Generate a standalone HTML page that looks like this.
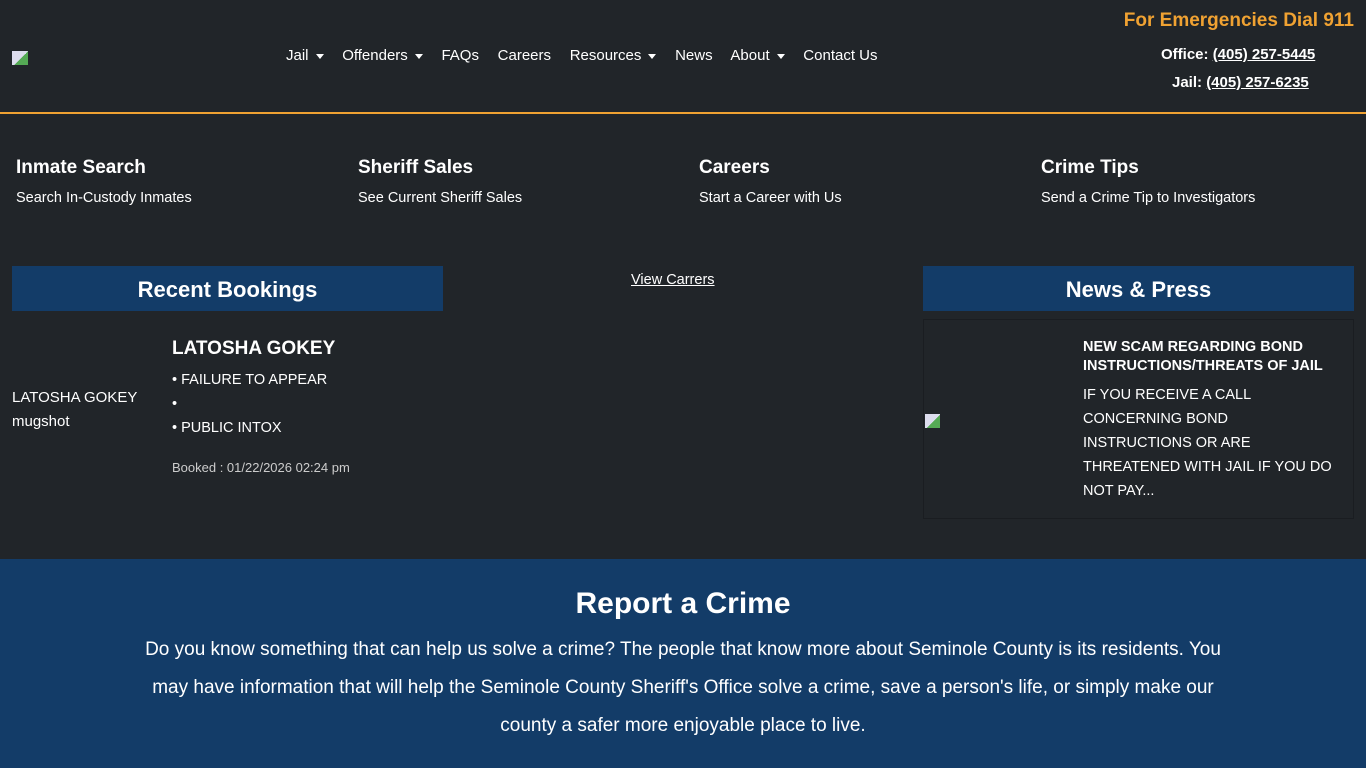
<!DOCTYPE html>
<html><head><meta charset="utf-8"><style>
*{margin:0;padding:0;box-sizing:border-box}
body{width:1366px;height:768px;overflow:hidden;background:#212529;color:#fff;font-family:"Liberation Sans",sans-serif;position:relative}
.a{position:absolute;white-space:nowrap}
.nav{top:47px;font-size:15px;left:286px;word-spacing:0}
.nav span{margin-right:14.5px}
.car{display:inline-block;border-top:5px solid #fff;border-left:4px solid transparent;border-right:4px solid transparent;vertical-align:middle;margin-left:7px}
u{text-decoration:underline}
.q h3{font-size:19px;font-weight:bold}
.q p{font-size:14.5px;margin-top:11px}
.hd{position:absolute;background:#133c68;height:45px;font-size:22px;font-weight:bold;text-align:center;line-height:47px}
</style></head><body>
<div class="a" style="left:12px;top:51px;width:16px;height:14px;background:linear-gradient(135deg,#dde 55%,#5a5 55%)"></div>
<div class="a nav"><span>Jail<i class="car"></i></span> <span>Offenders<i class="car"></i></span> <span>FAQs</span> <span>Careers</span> <span>Resources<i class="car"></i></span> <span>News</span> <span>About<i class="car"></i></span> <span>Contact Us</span></div>
<div class="a" style="right:12px;top:10px;color:#f0a232;font-size:19px;font-weight:bold">For Emergencies Dial 911</div>
<div class="a" style="left:1161px;top:46px;font-size:15px;font-weight:bold">Office: <u>(405) 257-5445</u></div>
<div class="a" style="left:1172px;top:74px;font-size:15px;font-weight:bold">Jail: <u>(405) 257-6235</u></div>
<div class="a" style="left:0;top:112px;width:1366px;height:2px;background:#f0a232"></div>
<div class="a q" style="left:16px;top:157px"><h3>Inmate Search</h3><p>Search In-Custody Inmates</p></div>
<div class="a q" style="left:358px;top:157px"><h3>Sheriff Sales</h3><p>See Current Sheriff Sales</p></div>
<div class="a q" style="left:699px;top:157px"><h3>Careers</h3><p>Start a Career with Us</p></div>
<div class="a q" style="left:1041px;top:157px"><h3>Crime Tips</h3><p>Send a Crime Tip to Investigators</p></div>
<div class="hd" style="left:12px;top:266px;width:431px">Recent Bookings</div>
<div class="a" style="left:12px;top:386px;font-size:15px;line-height:24px">LATOSHA GOKEY<br>mugshot</div>
<div class="a" style="left:172px;top:338px;font-size:19px;font-weight:bold">LATOSHA GOKEY</div>
<div class="a" style="left:172px;top:368px;font-size:14.5px;line-height:24px">• FAILURE TO APPEAR<br>•<br>• PUBLIC INTOX</div>
<div class="a" style="left:172px;top:460px;font-size:13px;color:#ccc">Booked : 01/22/2026 02:24 pm</div>
<div class="a" style="left:631px;top:272px;font-size:14.5px"><u>View Carrers</u></div>
<div class="hd" style="left:923px;top:266px;width:431px">News &amp; Press</div>
<div class="a" style="left:923px;top:319px;width:431px;height:200px;border:1px solid #1a1d21"></div>
<div class="a" style="left:925px;top:414px;width:15px;height:14px;background:linear-gradient(135deg,#dde 55%,#5a5 55%)"></div>
<div class="a" style="left:1083px;top:338px;font-size:14.5px;font-weight:bold;line-height:19px">NEW SCAM REGARDING BOND<br>INSTRUCTIONS/THREATS OF JAIL</div>
<div class="a" style="left:1083px;top:383px;font-size:14.5px;line-height:24px">IF YOU RECEIVE A CALL<br>CONCERNING BOND<br>INSTRUCTIONS OR ARE<br>THREATENED WITH JAIL IF YOU DO<br>NOT PAY...</div>
<div class="a" style="left:0;top:559px;width:1366px;height:209px;background:#133c68"></div>
<div class="a" style="left:0;width:1366px;text-align:center;top:587px;font-size:30px;font-weight:bold">Report a Crime</div>
<div class="a" style="left:0;width:1366px;text-align:center;top:631px;font-size:19px;line-height:38px">Do you know something that can help us solve a crime? The people that know more about Seminole County is its residents. You<br>may have information that will help the Seminole County Sheriff's Office solve a crime, save a person's life, or simply make our<br>county a safer more enjoyable place to live.</div>
</body></html>
